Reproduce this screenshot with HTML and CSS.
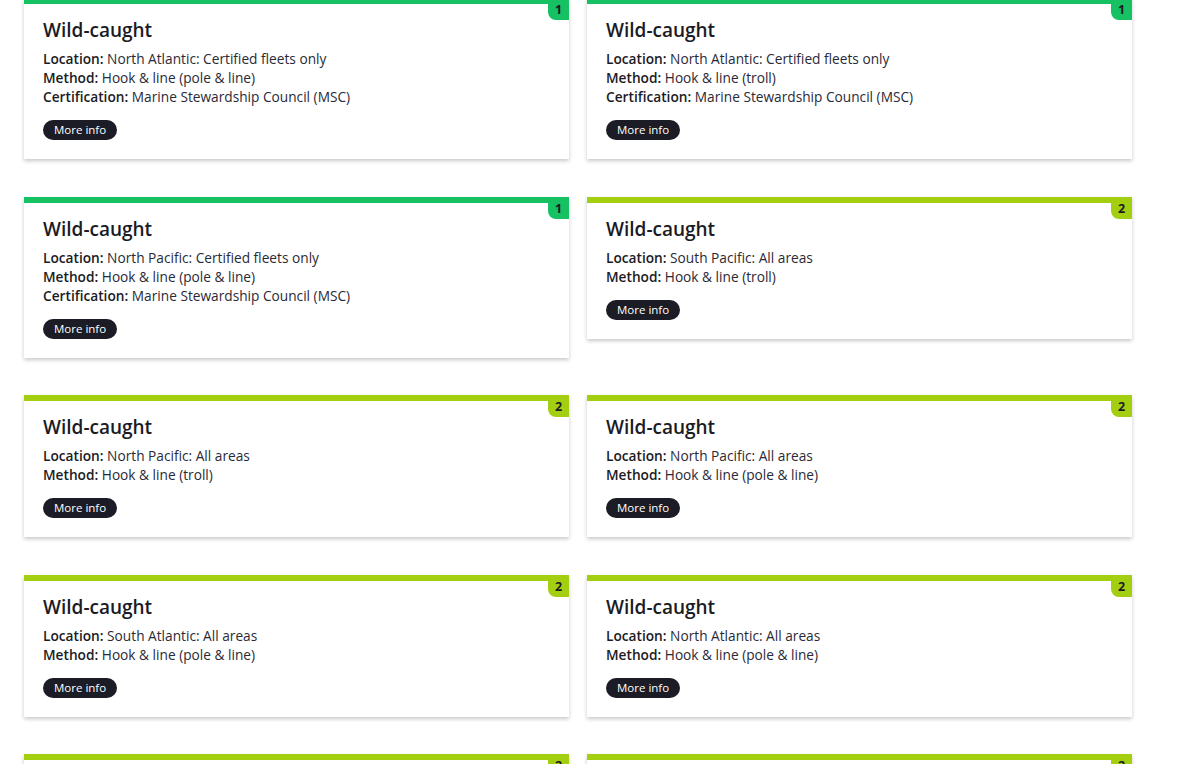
FILE: index.html
```html
<!DOCTYPE html>
<html lang="en">
<head>
<meta charset="utf-8">
<title>Wild-caught options</title>
<link rel="stylesheet" href="styles.css">
</head>
<body>
<main class="grid">
  <article class="card rank-1">
    <span class="badge">1</span>
    <h2 class="title">Wild-caught</h2>
    <p class="line"><b>Location:</b> North Atlantic: Certified fleets only</p>
    <p class="line"><b>Method:</b> Hook &amp; line (pole &amp; line)</p>
    <p class="line"><b>Certification:</b> Marine Stewardship Council (MSC)</p>
    <button class="more">More info</button>
  </article>
  <article class="card rank-1">
    <span class="badge">1</span>
    <h2 class="title">Wild-caught</h2>
    <p class="line"><b>Location:</b> North Atlantic: Certified fleets only</p>
    <p class="line"><b>Method:</b> Hook &amp; line (troll)</p>
    <p class="line"><b>Certification:</b> Marine Stewardship Council (MSC)</p>
    <button class="more">More info</button>
  </article>
  <article class="card rank-1">
    <span class="badge">1</span>
    <h2 class="title">Wild-caught</h2>
    <p class="line"><b>Location:</b> North Pacific: Certified fleets only</p>
    <p class="line"><b>Method:</b> Hook &amp; line (pole &amp; line)</p>
    <p class="line"><b>Certification:</b> Marine Stewardship Council (MSC)</p>
    <button class="more">More info</button>
  </article>
  <article class="card rank-2">
    <span class="badge">2</span>
    <h2 class="title">Wild-caught</h2>
    <p class="line"><b>Location:</b> South Pacific: All areas</p>
    <p class="line"><b>Method:</b> Hook &amp; line (troll)</p>
    <button class="more">More info</button>
  </article>
  <article class="card rank-2">
    <span class="badge">2</span>
    <h2 class="title">Wild-caught</h2>
    <p class="line"><b>Location:</b> North Pacific: All areas</p>
    <p class="line"><b>Method:</b> Hook &amp; line (troll)</p>
    <button class="more">More info</button>
  </article>
  <article class="card rank-2">
    <span class="badge">2</span>
    <h2 class="title">Wild-caught</h2>
    <p class="line"><b>Location:</b> North Pacific: All areas</p>
    <p class="line"><b>Method:</b> Hook &amp; line (pole &amp; line)</p>
    <button class="more">More info</button>
  </article>
  <article class="card rank-2">
    <span class="badge">2</span>
    <h2 class="title">Wild-caught</h2>
    <p class="line"><b>Location:</b> South Atlantic: All areas</p>
    <p class="line"><b>Method:</b> Hook &amp; line (pole &amp; line)</p>
    <button class="more">More info</button>
  </article>
  <article class="card rank-2">
    <span class="badge">2</span>
    <h2 class="title">Wild-caught</h2>
    <p class="line"><b>Location:</b> North Atlantic: All areas</p>
    <p class="line"><b>Method:</b> Hook &amp; line (pole &amp; line)</p>
    <button class="more">More info</button>
  </article>
  <article class="card rank-2">
    <span class="badge">2</span>
    <h2 class="title">Wild-caught</h2>
    <p class="line"><b>Location:</b> South Pacific: All areas</p>
    <p class="line"><b>Method:</b> Hook &amp; line (pole &amp; line)</p>
    <button class="more">More info</button>
  </article>
  <article class="card rank-2">
    <span class="badge">2</span>
    <h2 class="title">Wild-caught</h2>
    <p class="line"><b>Location:</b> Indian Ocean: All areas</p>
    <p class="line"><b>Method:</b> Hook &amp; line (pole &amp; line)</p>
    <button class="more">More info</button>
  </article>
</main>
</body>
</html>
```
FILE: styles.css
```css
html, body {
  margin: 0;
  padding: 0;
  background: #ffffff;
}

body {
  font-family: "Open Sans", "DejaVu Sans", sans-serif;
  color: #22222c;
}

.grid {
  display: grid;
  grid-template-columns: 545px 545px;
  column-gap: 18px;
  row-gap: 37.5px;
  align-items: start;
  padding: 0 0 40px 24px;
  margin-top: -2px;
}

.card {
  position: relative;
  background: #fff;
  border-top: 6px solid #15c162;
  padding: 13px 19px 19px;
  box-shadow: 0 2px 4px rgba(0, 0, 0, 0.22);
}

.card.rank-2 {
  border-top-color: #a4cf11;
}

.badge {
  position: absolute;
  top: -1px;
  right: 0;
  width: 21px;
  height: 17px;
  background: #15c162;
  border-bottom-left-radius: 8px;
  font-size: 12.5px;
  font-weight: 700;
  line-height: 14px;
  text-align: center;
  color: #1b1b24;
}

.rank-2 .badge {
  background: #a4cf11;
}

.title {
  margin: 0 0 5px;
  font-size: 19px;
  font-weight: 600;
  line-height: 27px;
  color: #1b1b24;
}

.line {
  margin: 0;
  font-size: 13.7px;
  line-height: 19px;
  color: #2a2a36;
}

.line b {
  font-weight: 600;
  color: #1b1b24;
}

.more {
  display: block;
  margin-top: 14px;
  height: 20px;
  padding: 0 11px;
  border: 0;
  border-radius: 10px;
  background: #1c1c26;
  color: #fff;
  font-family: inherit;
  font-size: 11.5px;
  font-weight: 500;
  line-height: 20px;
  cursor: pointer;
}
```
